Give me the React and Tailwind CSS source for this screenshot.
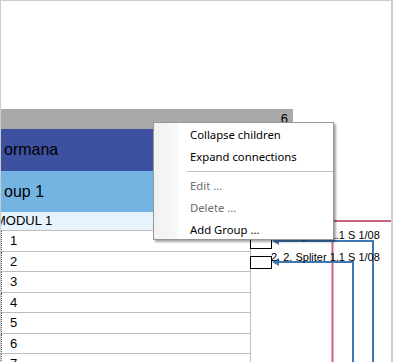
import React from "react";

const rows = ["1", "2", "3", "4", "5", "6", "7"];

function MenuItem({ children, disabled }) {
  return (
    <div
      className={
        "h-[22px] flex items-center pl-[36px] " +
        (disabled ? "text-[#6d6d6d]" : "text-black")
      }
    >
      {children}
    </div>
  );
}

export default function App() {
  return (
    <div
      className="relative w-[393px] h-[362px] overflow-hidden bg-white border-t border-l border-r-2 border-[#cccccc]"
      style={{ fontFamily: '"Liberation Sans", Arial, sans-serif' }}
    >
      <div className="flex flex-col">
        <div className="h-[108px]" />
        <div className="w-[292px] h-[20px] bg-[#a9a9a9] flex items-center justify-end pr-[5px] text-[13px] text-black">
          6
        </div>
        <div className="w-[292px] h-[42px] bg-[#3d51a0] flex items-center text-[16px] text-black pl-[3px]">
          ormana
        </div>
        <div className="w-[292px] h-[41px] bg-[#74b4e3] flex items-center text-[16px] text-black pl-[3px]">
          oup 1
        </div>
        <div className="w-[250px] h-[19px] bg-[#e6f3fc] flex items-center text-[13px] text-black border-b border-[#bdbdbd] overflow-hidden">
          <span className="ml-[-6px]">MODUL 1</span>
        </div>
        {rows.map((r) => (
          <div
            key={r}
            className="w-[250px] h-[20.5px] flex items-center text-[13px] text-black border-b border-r border-l border-[#bdbdbd] border-l-[#555]"
            style={{ borderStyle: "solid", borderLeftStyle: "dotted" }}
          >
            <span className="pl-[8px]">{r}</span>
          </div>
        ))}
      </div>

      {/* diagram */}
      <svg className="absolute left-[-1px] top-[-1px]" width="393" height="362">
        <line x1="300" y1="221" x2="393" y2="221" stroke="#c9627a" strokeWidth="2" />
        <line x1="332.5" y1="221" x2="332.5" y2="362" stroke="#c9627a" strokeWidth="2" />
        <polyline points="278,241 373,241 373,362" fill="none" stroke="#3e78b2" strokeWidth="2" />
        <polyline points="278,262 353,262 353,362" fill="none" stroke="#3e78b2" strokeWidth="2" />
        <polygon points="272,241 279,237 279,245" fill="#3e78b2" />
        <polygon points="272,262 279,258 279,266" fill="#3e78b2" />
      </svg>
      <div className="absolute left-[249px] top-[238px] w-[22px] h-[10px] border border-black bg-white" />
      <div className="absolute left-[249px] top-[255px] w-[22px] h-[13px] border border-black bg-white" />
      <div className="absolute left-[270px] top-[228px] text-[11px] leading-[13px] text-black">
        2. 1. Spliter 1.1 S 1/08
      </div>
      <div className="absolute left-[270px] top-[250px] text-[11px] leading-[13px] text-black">
        2. 2. Spliter 1.1 S 1/08
      </div>

      {/* context menu */}
      <div
        className="absolute left-[152px] top-[121px] w-[181px] h-[118px] bg-white border border-[#979797] shadow-[2px_2px_2px_rgba(0,0,0,0.35)] text-[11.3px]"
        style={{ fontFamily: '"Noto Sans", "Open Sans", sans-serif' }}
      >
        <div className="absolute left-0 top-0 bottom-0 w-[25px] bg-gradient-to-r from-[#f1f1f1] to-[#f8f8f8] border-r border-[#ffffff]" />
        <div className="relative flex flex-col pt-[1px]">
          <MenuItem>Collapse children</MenuItem>
          <MenuItem>Expand connections</MenuItem>
          <div className="h-[7px] flex items-center pl-[33px]">
            <div className="w-full h-[1px] bg-[#c5c5c5]" />
          </div>
          <MenuItem disabled>Edit ...</MenuItem>
          <MenuItem disabled>Delete ...</MenuItem>
          <MenuItem>Add Group ...</MenuItem>
        </div>
      </div>
    </div>
  );
}
